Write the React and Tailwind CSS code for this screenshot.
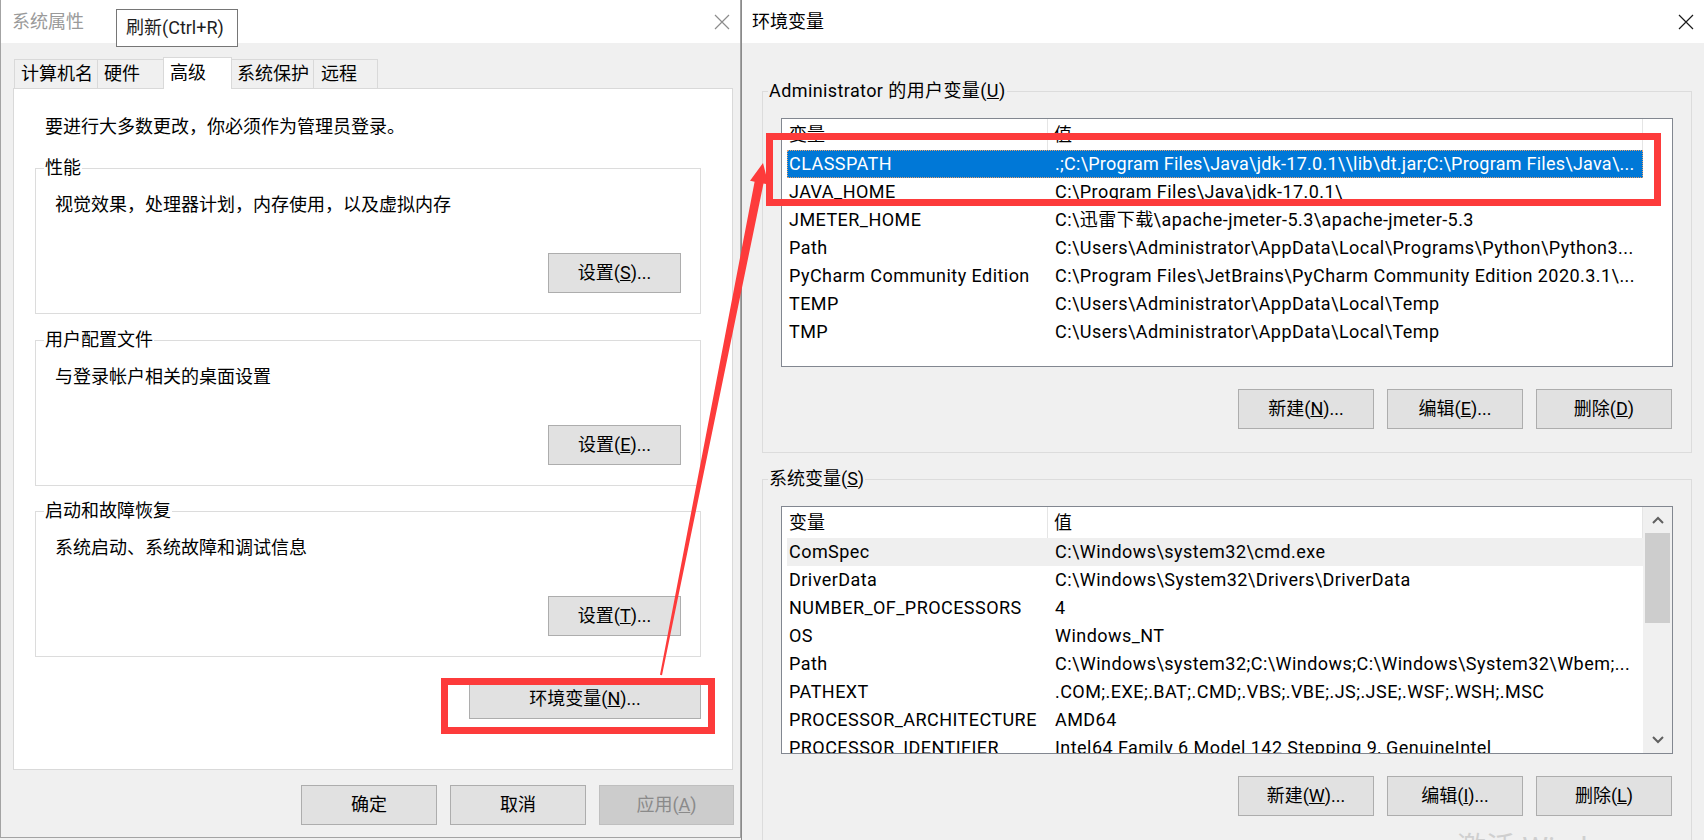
import React from "react";

const userVars = [
  ["CLASSPATH", ".;C:\\Program Files\\Java\\jdk-17.0.1\\\\lib\\dt.jar;C:\\Program Files\\Java\\..."],
  ["JAVA_HOME", "C:\\Program Files\\Java\\jdk-17.0.1\\"],
  ["JMETER_HOME", "C:\\迅雷下载\\apache-jmeter-5.3\\apache-jmeter-5.3"],
  ["Path", "C:\\Users\\Administrator\\AppData\\Local\\Programs\\Python\\Python3..."],
  ["PyCharm Community Edition", "C:\\Program Files\\JetBrains\\PyCharm Community Edition 2020.3.1\\..."],
  ["TEMP", "C:\\Users\\Administrator\\AppData\\Local\\Temp"],
  ["TMP", "C:\\Users\\Administrator\\AppData\\Local\\Temp"],
];

const sysVars = [
  ["ComSpec", "C:\\Windows\\system32\\cmd.exe"],
  ["DriverData", "C:\\Windows\\System32\\Drivers\\DriverData"],
  ["NUMBER_OF_PROCESSORS", "4"],
  ["OS", "Windows_NT"],
  ["Path", "C:\\Windows\\system32;C:\\Windows;C:\\Windows\\System32\\Wbem;..."],
  ["PATHEXT", ".COM;.EXE;.BAT;.CMD;.VBS;.VBE;.JS;.JSE;.WSF;.WSH;.MSC"],
  ["PROCESSOR_ARCHITECTURE", "AMD64"],
  ["PROCESSOR_IDENTIFIER", "Intel64 Family 6 Model 142 Stepping 9, GenuineIntel"],
];

const CloseX = ({ color }) => (
  <svg width="16" height="16" viewBox="0 0 16 16">
    <path d="M1 1L15 15M15 1L1 15" stroke={color} strokeWidth="1.2" fill="none" />
  </svg>
);

const Btn = ({ children, className = "", disabled = false }) => (
  <div
    className={`flex shrink-0 items-center justify-center border ${
      disabled ? "border-[#bfbfbf] bg-[#cccccc] text-[#8a8a8a]" : "border-[#adadad] bg-[#e1e1e1] text-black"
    } ${className}`}
  >
    {children}
  </div>
);

// group box on the 高级 tab
const Group = ({ title, text, btn, className = "" }) => (
  <fieldset className={`h-[158px] w-[666px] border border-[#dcdcdc] ${className}`}>
    <legend className="ml-[8px] px-[1px]">{title}</legend>
    <div className="flex flex-col">
      <div className="ml-[19px] mt-[13px]">{text}</div>
      <Btn className="mr-[19px] mt-[36px] h-[40px] w-[133px] self-end">{btn}</Btn>
    </div>
  </fieldset>
);

const Row = ({ name, value, state }) => {
  let cls = "border-transparent";
  if (state === "sel") cls = "border-dotted border-[#e8a06a] bg-[#0078d7] text-white";
  if (state === "hover") cls = "border-transparent bg-[#efefef]";
  return (
    <div className={`ml-[5px] flex h-[28px] w-[856px] shrink-0 items-center whitespace-nowrap border tracking-[0.45px] ${cls}`}>
      <div className="w-[260px] shrink-0 overflow-hidden pl-[1px]">{name}</div>
      <div className={`min-w-0 flex-1 overflow-hidden pl-[7px] ${value.length > 66 ? "tracking-[0.25px]" : ""}`}>{value}</div>
    </div>
  );
};

const Chevron = ({ up }) => (
  <svg width="12" height="8" viewBox="0 0 12 8">
    <path d={up ? "M1 7L6 2L11 7" : "M1 1L6 6L11 1"} stroke="#606060" strokeWidth="2" fill="none" />
  </svg>
);

const VarList = ({ rows, selected, hover, scroll, height }) => (
  <div className={`ml-[18px] mt-[15px] flex w-[892px] shrink-0 overflow-hidden border border-[#828790] bg-white ${height}`}>
    <div className="flex w-[861px] shrink-0 flex-col">
      <div className="flex h-[31px] shrink-0">
        <div className="flex w-[266px] items-center border-r border-[#e5e5e5] pl-[7px]">变量</div>
        <div className="flex w-[595px] items-center border-r border-[#e5e5e5] pl-[6px]">值</div>
      </div>
      {rows.map(([n, v]) => (
        <Row key={n + v} name={n} value={v} state={n === selected ? "sel" : n === hover ? "hover" : ""} />
      ))}
    </div>
    {scroll && (
      <div className="flex w-[29px] shrink-0 flex-col bg-[#f0f0f0]">
        <div className="flex h-[26px] items-center justify-center">
          <Chevron up />
        </div>
        <div className="mx-[2px] h-[90px] bg-[#cdcdcd]" />
        <div className="flex-1" />
        <div className="flex h-[26px] items-center justify-center">
          <Chevron />
        </div>
      </div>
    )}
  </div>
);

export default function App() {
  return (
    <div className="relative flex h-[840px] w-[1704px] overflow-hidden bg-[#f0f0f0] font-['Roboto','Noto_Sans_CJK_SC',sans-serif] text-[18px] leading-[24px] text-black">
      {/* 系统属性 */}
      <div className="flex h-[838px] w-[741px] shrink-0 flex-col border-x border-b border-[#a3a3a3] bg-[#f0f0f0]">
        <div className="flex h-[43px] shrink-0 items-center justify-between bg-white pl-[11px] pr-[10px]">
          <span className="text-[#9a9a9a]">系统属性</span>
          <CloseX color="#8c8c8c" />
        </div>
        <div className="ml-[13px] mt-[14px] flex h-[31px] items-end">
          <div className="flex h-[29px] w-[84px] items-center border-x border-t border-[#d9d9d9] pl-[6px]">计算机名</div>
          <div className="-ml-px flex h-[29px] w-[67px] items-center border-x border-t border-[#d9d9d9] pl-[6px]">硬件</div>
          <div className="relative z-10 -mb-px -ml-px flex h-[32px] w-[69px] items-start border-x border-t border-[#d9d9d9] bg-white pl-[6px] pt-[3px]">高级</div>
          <div className="-ml-px flex h-[29px] w-[83px] items-center border-x border-t border-[#d9d9d9] pl-[5px]">系统保护</div>
          <div className="-ml-px flex h-[29px] w-[65px] items-center border-x border-t border-[#d9d9d9] pl-[7px]">远程</div>
        </div>
        <div className="ml-[12px] flex h-[682px] w-[720px] shrink-0 flex-col border border-[#d9d9d9] bg-white pl-[21px]">
          <div className="ml-[10px] mt-[26px]">要进行大多数更改，你必须作为管理员登录。</div>
          <Group
            className="mt-[17px]"
            title="性能"
            text="视觉效果，处理器计划，内存使用，以及虚拟内存"
            btn={<>设置(<u>S</u>)...</>}
          />
          <Group
            className="mt-[14px]"
            title="用户配置文件"
            text="与登录帐户相关的桌面设置"
            btn={<>设置(<u>E</u>)...</>}
          />
          <Group
            className="mt-[13px]"
            title="启动和故障恢复"
            text="系统启动、系统故障和调试信息"
            btn={<>设置(<u>T</u>)...</>}
          />
          <div className="mt-[22px] flex w-[666px] justify-end">
            <Btn className="h-[40px] w-[232px]">
              环境变量(<u>N</u>)...
            </Btn>
          </div>
        </div>
        <div className="mt-[15px] flex justify-end gap-[13px] pr-[6px]">
          <Btn className="h-[40px] w-[136px]">确定</Btn>
          <Btn className="h-[40px] w-[136px]">取消</Btn>
          <Btn disabled className="h-[40px] w-[135px]">
            应用(<u>A</u>)
          </Btn>
        </div>
      </div>

      {/* 环境变量 */}
      <div className="flex h-[840px] flex-1 flex-col border-l border-[#8a8a8a] bg-[#f0f0f0]">
        <div className="flex h-[43px] shrink-0 items-center justify-between bg-white pl-[10px] pr-[10px]">
          <span>环境变量</span>
          <CloseX color="#1a1a1a" />
        </div>
        <div className="flex flex-col pl-[20px]">
          <fieldset className="mt-[36px] flex h-[374px] w-[930px] flex-col border border-[#dcdcdc]">
            <legend className="ml-[5px] px-[1px] tracking-[0.4px]">Administrator 的用户变量(<u>U</u>)</legend>
            <VarList rows={userVars} selected="CLASSPATH" height="h-[249px]" />
            <div className="mt-[22px] flex justify-end gap-[13px] pr-[19px]">
              <Btn className="h-[40px] w-[136px]">新建(<u>N</u>)...</Btn>
              <Btn className="h-[40px] w-[136px]">编辑(<u>E</u>)...</Btn>
              <Btn className="h-[40px] w-[136px]">删除(<u>D</u>)</Btn>
            </div>
          </fieldset>
          <fieldset className="mt-[14px] flex h-[400px] w-[930px] flex-col border border-[#dcdcdc]">
            <legend className="ml-[5px] px-[1px]">系统变量(<u>S</u>)</legend>
            <VarList rows={sysVars} hover="ComSpec" scroll height="h-[248px]" />
            <div className="mt-[22px] flex justify-end gap-[13px] pr-[19px]">
              <Btn className="h-[40px] w-[136px]">新建(<u>W</u>)...</Btn>
              <Btn className="h-[40px] w-[136px]">编辑(<u>I</u>)...</Btn>
              <Btn className="h-[40px] w-[136px]">删除(<u>L</u>)</Btn>
            </div>
          </fieldset>
        </div>
      </div>

      {/* tooltip */}
      <div className="absolute left-[116px] top-[9px] flex h-[38px] w-[122px] items-center border border-[#767676] bg-white pl-[9px] text-[#1e1e1e]">
        刷新(Ctrl+R)
      </div>

      {/* annotations */}
      <div className="absolute left-[441px] top-[678px] h-[56px] w-[274px] border-[7px] border-[#fd3b3b]" />
      <div className="absolute left-[766px] top-[133px] h-[73px] w-[895px] border-[7px] border-[#fd3b3b]" />
      <svg className="pointer-events-none absolute left-0 top-0" width="1704" height="840" viewBox="0 0 1704 840">
        <polygon
          points="763,163 768.5,184.5 763.5,183.5 662,675.2 660,674.8 754.6,181.7 750,180.8"
          fill="#fd3b3b"
        />
      </svg>

      {/* watermark */}
      <div className="absolute left-[1457px] top-[831px] text-[29px] leading-[34px] text-[#cfcfcf]">激活 Windows</div>
    </div>
  );
}
